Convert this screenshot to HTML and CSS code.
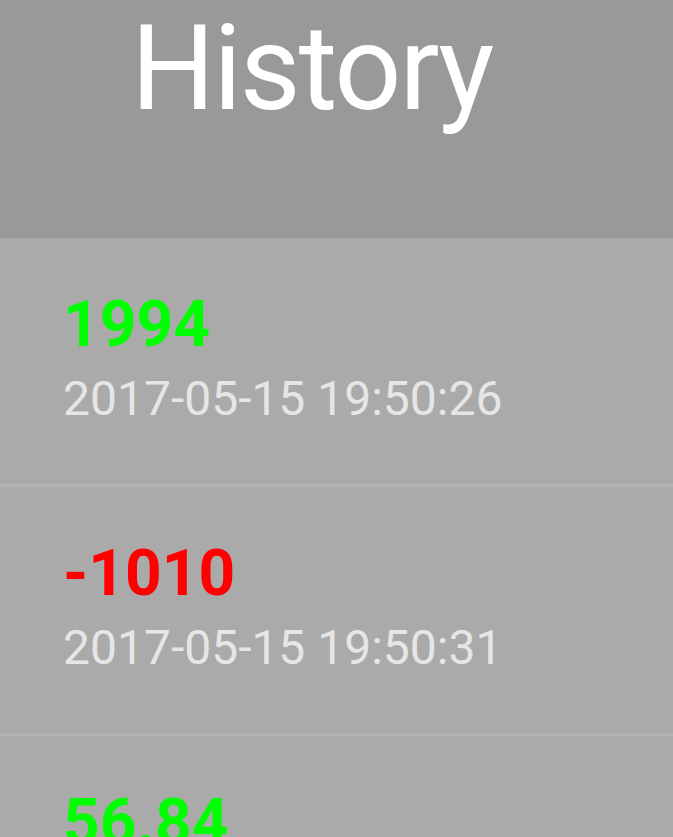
FILE: index.html
```html
<!DOCTYPE html>
<html>
<head>
<meta charset="utf-8">
<link rel="stylesheet" href="styles.css">
</head>
<body>
<div class="screen">
  <header class="header">
    <h1 class="title">History</h1>
  </header>
  <ul class="list">
    <li class="row">
      <div class="amount positive">1994</div>
      <div class="date">2017-05-15 19:50:26</div>
    </li>
    <li class="row">
      <div class="amount negative">-1010</div>
      <div class="date">2017-05-15 19:50:31</div>
    </li>
    <li class="row">
      <div class="amount positive">56.84</div>
      <div class="date">2017-05-15 19:50:40</div>
    </li>
  </ul>
</div>
</body>
</html>
```

FILE: styles.css
```css
html, body {
  margin: 0;
  padding: 0;
  height: 100%;
  overflow: hidden;
}
body {
  font-family: Roboto, "Noto Sans", sans-serif;
  background: #aaaaaa;
}
.screen {
  display: flex;
  flex-direction: column;
}
.header {
  height: 238px;
  background: #999999;
  padding-left: 131px;
  box-sizing: border-box;
}
.title {
  margin: 0;
  font-size: 118px;
  font-weight: 400;
  line-height: 138px;
  letter-spacing: -2px;
  color: #ffffff;
}
.list {
  list-style: none;
  margin: 0;
  padding: 0;
}
.row {
  height: 249px;
  box-sizing: border-box;
  background: #aaaaaa;
  border-bottom: 3px solid #b4b4b4;
  padding: 49px 0 0 63px;
  display: flex;
  flex-direction: column;
  gap: 9px;
}
.amount {
  font-size: 64px;
  font-weight: 700;
  line-height: 75px;
}
.positive { color: #00ff00; }
.negative { color: #ff0000; }
.date {
  font-size: 48px;
  line-height: 56px;
  color: #e6e6e6;
}
```
